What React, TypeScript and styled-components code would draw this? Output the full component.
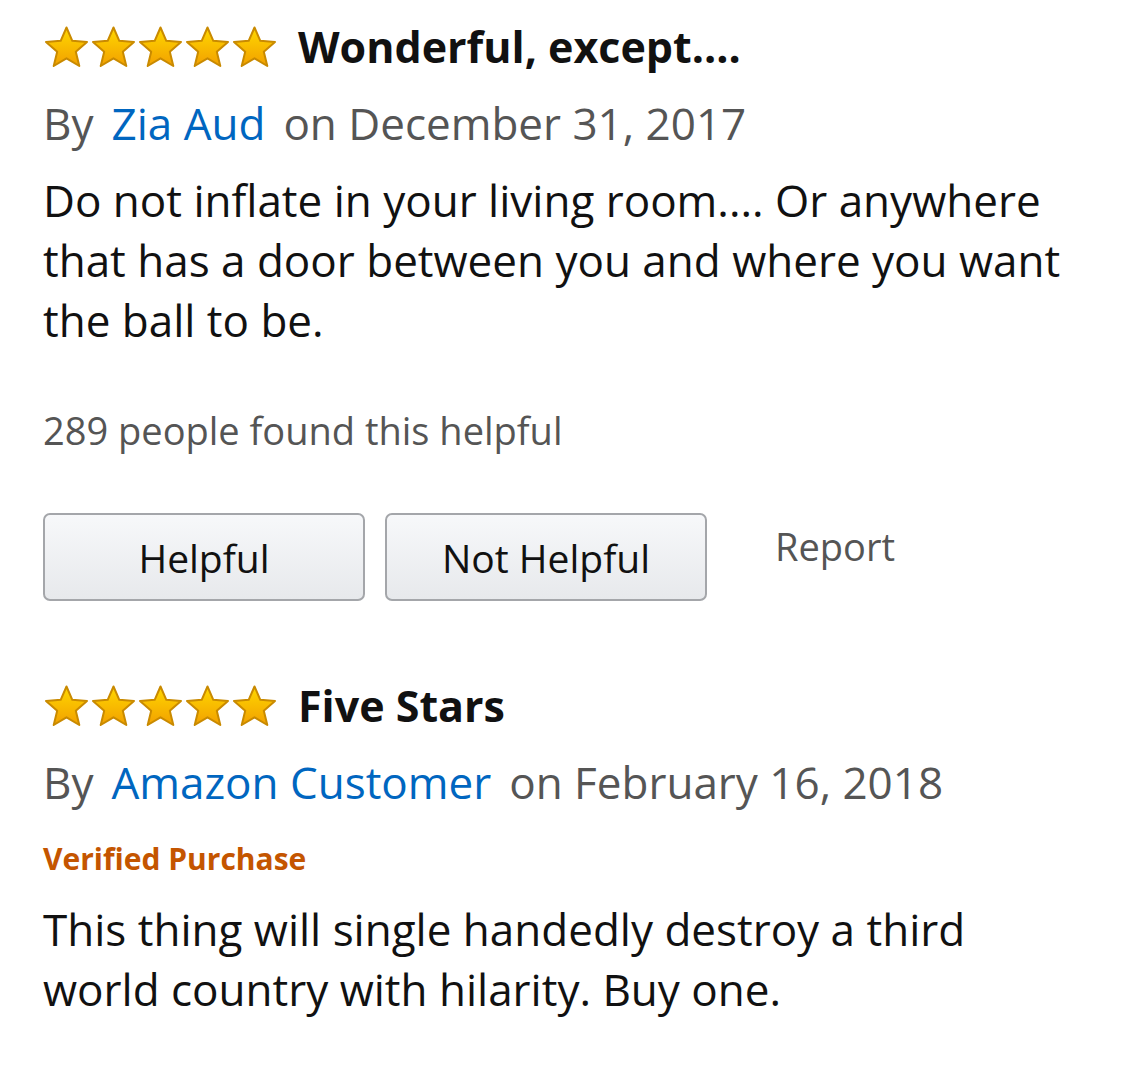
import React from 'react';
import styled, {createGlobalStyle} from 'styled-components';

const Global = createGlobalStyle`
body {
    margin: 0;
    background: #fff;
    font-family: "Open Sans", "Noto Sans", Arial, sans-serif;
    color: #111;
}
`
const Page = styled.div`
width: 1125px;
padding: 25px 56px 0 43px;
box-sizing: border-box;
`
const Review = styled.div`
display: flex;
flex-direction: column;
`
const TitleRow = styled.div`
display: flex;
align-items: center;
gap: 20px;
height: 44px;
`
const Stars = styled.div`
display: flex;
`
const Title = styled.div`
font-size: 43px;
font-weight: 700;
color: #111;
line-height: 44px;
`
const Byline = styled.div`
display: flex;
gap: 18px;
font-size: 44px;
color: #555;
margin-top: 26px;
line-height: 56px;
white-space: nowrap;
`
const Author = styled.span`
color: #0066c0;
`
const Verified = styled.div`
font-size: 30px;
font-weight: 700;
color: #c45500;
margin-top: 29px;
line-height: 40px;
`
const Body = styled.div<{$top: number}>`
font-size: 44px;
line-height: 60px;
margin-top: ${p => p.$top}px;
color: #111;
`
const HelpfulCount = styled.div`
font-size: 38px;
color: #555;
margin-top: 56px;
line-height: 48px;
`
const Actions = styled.div`
display: flex;
gap: 20px;
margin-top: 59px;
align-items: flex-start;
`
const Button = styled.button`
width: 322px;
height: 88px;
border: 2px solid #a4a6aa;
border-radius: 7px;
background: linear-gradient(#f7f8fa, #e7e9ec);
font-family: inherit;
font-size: 39px;
color: #111;
padding: 0;
`
const Report = styled.span`
font-size: 38px;
color: #555;
margin-left: 48px;
line-height: 66px;
`
const Divider = styled.div`
height: 83px;
`

const Star = () => (
    <svg width="47" height="44" viewBox="0 0 47 44">
        <defs>
            <linearGradient id="sg" x1="0" y1="0" x2="0" y2="1">
                <stop offset="0" stopColor="#ffd800"/>
                <stop offset="1" stopColor="#f2a000"/>
            </linearGradient>
        </defs>
        <path
            d="M23.5 2.5 L29.3 15.8 L44 17 L32.8 26.7 L36.3 41 L23.5 33.3 L10.7 41 L14.2 26.7 L3 17 L17.7 15.8 Z"
            fill="url(#sg)" stroke="#c98a00" strokeWidth="2" strokeLinejoin="round"/>
    </svg>
)

const FiveStars = () => (
    <Stars>{[0, 1, 2, 3, 4].map(i => <Star key={i}/>)}</Stars>
)

export default function App() {
    return (
        <Page>
            <Global/>
            <Review>
                <TitleRow>
                    <FiveStars/>
                    <Title>Wonderful, except....</Title>
                </TitleRow>
                <Byline><span>By</span><Author>Zia Aud</Author><span>on December 31, 2017</span></Byline>
                <Body $top={19}>
                    Do not inflate in your living room.... Or anywhere that has a door between you and where you want the ball to be.
                </Body>
                <HelpfulCount>289 people found this helpful</HelpfulCount>
                <Actions>
                    <Button>Helpful</Button>
                    <Button>Not Helpful</Button>
                    <Report>Report</Report>
                </Actions>
            </Review>
            <Divider/>
            <Review>
                <TitleRow>
                    <FiveStars/>
                    <Title>Five Stars</Title>
                </TitleRow>
                <Byline><span>By</span><Author>Amazon Customer</Author><span>on February 16, 2018</span></Byline>
                <Verified>Verified Purchase</Verified>
                <Body $top={20}>
                    This thing will single handedly destroy a third world country with hilarity. Buy one.
                </Body>
            </Review>
        </Page>
    )
}
